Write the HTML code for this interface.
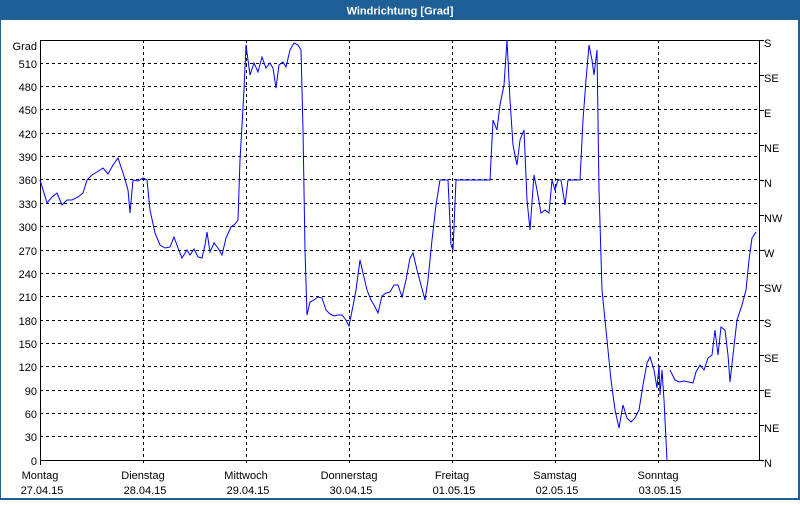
<!DOCTYPE html>
<html><head><meta charset="utf-8"><style>
body{margin:0;width:800px;height:500px;overflow:hidden;background:#fff;font-family:"Liberation Sans",sans-serif}
</style></head><body>
<svg width="800" height="500" xmlns="http://www.w3.org/2000/svg" font-family="Liberation Sans, sans-serif" font-size="11">
<rect x="0" y="0" width="800" height="500" fill="#1e6096"/>
<rect x="1" y="20" width="797" height="478" fill="#fff"/>
<text x="400" y="14.5" fill="#fff" font-weight="bold" text-anchor="middle" font-size="11">Windrichtung [Grad]</text>
<g stroke="#000" stroke-dasharray="3,3" stroke-width="1">
<path d="M40 63.5H760M40 86.5H760M40 109.5H760M40 133.5H760M40 156.5H760M40 179.5H760M40 203.5H760M40 226.5H760M40 250.5H760M40 273.5H760M40 296.5H760M40 320.5H760M40 343.5H760M40 366.5H760M40 390.5H760M40 413.5H760M40 436.5H760"/>
<path d="M143.5 40V466M246.5 40V466M349.5 40V466M452.5 40V466M555.5 40V466M658.5 40V466"/>
</g>
<rect x="40.5" y="40.5" width="719" height="420" fill="none" stroke="#000"/>
<path d="M40.5 460.5V465M760 40.5H764M760 75.5H764M760 110.5H764M760 145.5H764M760 180.5H764M760 215.5H764M760 250.5H764M760 285.5H764M760 320.5H764M760 355.5H764M760 390.5H764M760 425.5H764M760 460.5H764" stroke="#000"/>
<g text-anchor="end" fill="#000">
<text x="37" y="50">Grad</text><text x="37" y="68">510</text><text x="37" y="91">480</text><text x="37" y="114">450</text><text x="37" y="138">420</text><text x="37" y="161">390</text><text x="37" y="184">360</text><text x="37" y="208">330</text><text x="37" y="231">300</text><text x="37" y="255">270</text><text x="37" y="278">240</text><text x="37" y="301">210</text><text x="37" y="325">180</text><text x="37" y="348">150</text><text x="37" y="371">120</text><text x="37" y="395">90</text><text x="37" y="418">60</text><text x="37" y="441">30</text><text x="37" y="465">0</text>
</g>
<g fill="#000">
<text x="764" y="47">S</text><text x="764" y="82">SE</text><text x="764" y="117">E</text><text x="764" y="152">NE</text><text x="764" y="187">N</text><text x="764" y="222">NW</text><text x="764" y="257">W</text><text x="764" y="292">SW</text><text x="764" y="327">S</text><text x="764" y="362">SE</text><text x="764" y="397">E</text><text x="764" y="432">NE</text><text x="764" y="467">N</text>
</g>
<g fill="#000" text-anchor="middle">
<text x="40" y="479">Montag</text><text x="42" y="494">27.04.15</text>
<text x="143" y="479">Dienstag</text><text x="145" y="494">28.04.15</text>
<text x="246" y="479">Mittwoch</text><text x="248" y="494">29.04.15</text>
<text x="349" y="479">Donnerstag</text><text x="351" y="494">30.04.15</text>
<text x="452" y="479">Freitag</text><text x="454" y="494">01.05.15</text>
<text x="555" y="479">Samstag</text><text x="557" y="494">02.05.15</text>
<text x="658" y="479">Sonntag</text><text x="660" y="494">03.05.15</text>
</g>
<g fill="none" stroke="#0000ff" stroke-width="1">
<polyline points="40,180 47,203 52,197 57,193 62,205 67,200 72,200 78,197 83,193 87,180 92,175 97,172 103,168 108,174 113,165 118,158 124,176 128,190 130,213 133,180 138,181 143,178 147,180 150,210 155,233 160,245 165,248 170,247 174,237 178,248 182,258 187,250 190,255 194,249 198,257 202,258 205,245 207,232 210,252 214,243 218,248 222,255 226,238 231,227 235,224 238,220 240,160 244,90 246,45 250,75 254,63 258,72 262,57 266,68 270,63 273,68 276,88 279,65 283,62 286,67 290,50 294,43 298,45 301,50 303,130 305,250 307,315 310,302 314,300 318,297 322,298 326,310 330,314 334,316 338,315 342,315 346,320 349,326 353,306 356,290 360,260 363,273 367,290 371,300 374,305 378,313 382,296 386,293 390,292 394,285 398,285 402,297 406,280 410,258 413,253 417,270 421,285 425,300 428,280 432,240 436,205 440,180 444,180 448,180 451,245 453,250 456,180 460,180 465,180 470,180 475,180 480,180 485,180 490,180 493,120 497,130 500,105 504,85 507,40 510,100 513,145 517,165 520,140 524,130 527,200 530,230 534,175 537,190 541,213 545,210 549,213 552,180 555,190 558,180 561,180 565,205 568,180 572,180 576,180 580,180 583,120 586,80 589,45 592,60 594,75 597,50 599,190 602,290 605,320 608,350 611,380 615,410 619,428 623,405 627,418 631,422 635,418 639,410 643,385 647,363 650,357 654,370 657,388 659,365 660,395 662,370 664,400 666,440 667,461"/>
<polyline points="670,370 675,380 679,382 684,381 689,382 693,383 696,372 700,365 704,370 708,358 712,355 715,330 718,355 721,327 725,330 728,355 730,382 733,355 737,320 742,305 746,290 749,260 752,238 756,232"/>
</g>
</svg>
</body></html>
